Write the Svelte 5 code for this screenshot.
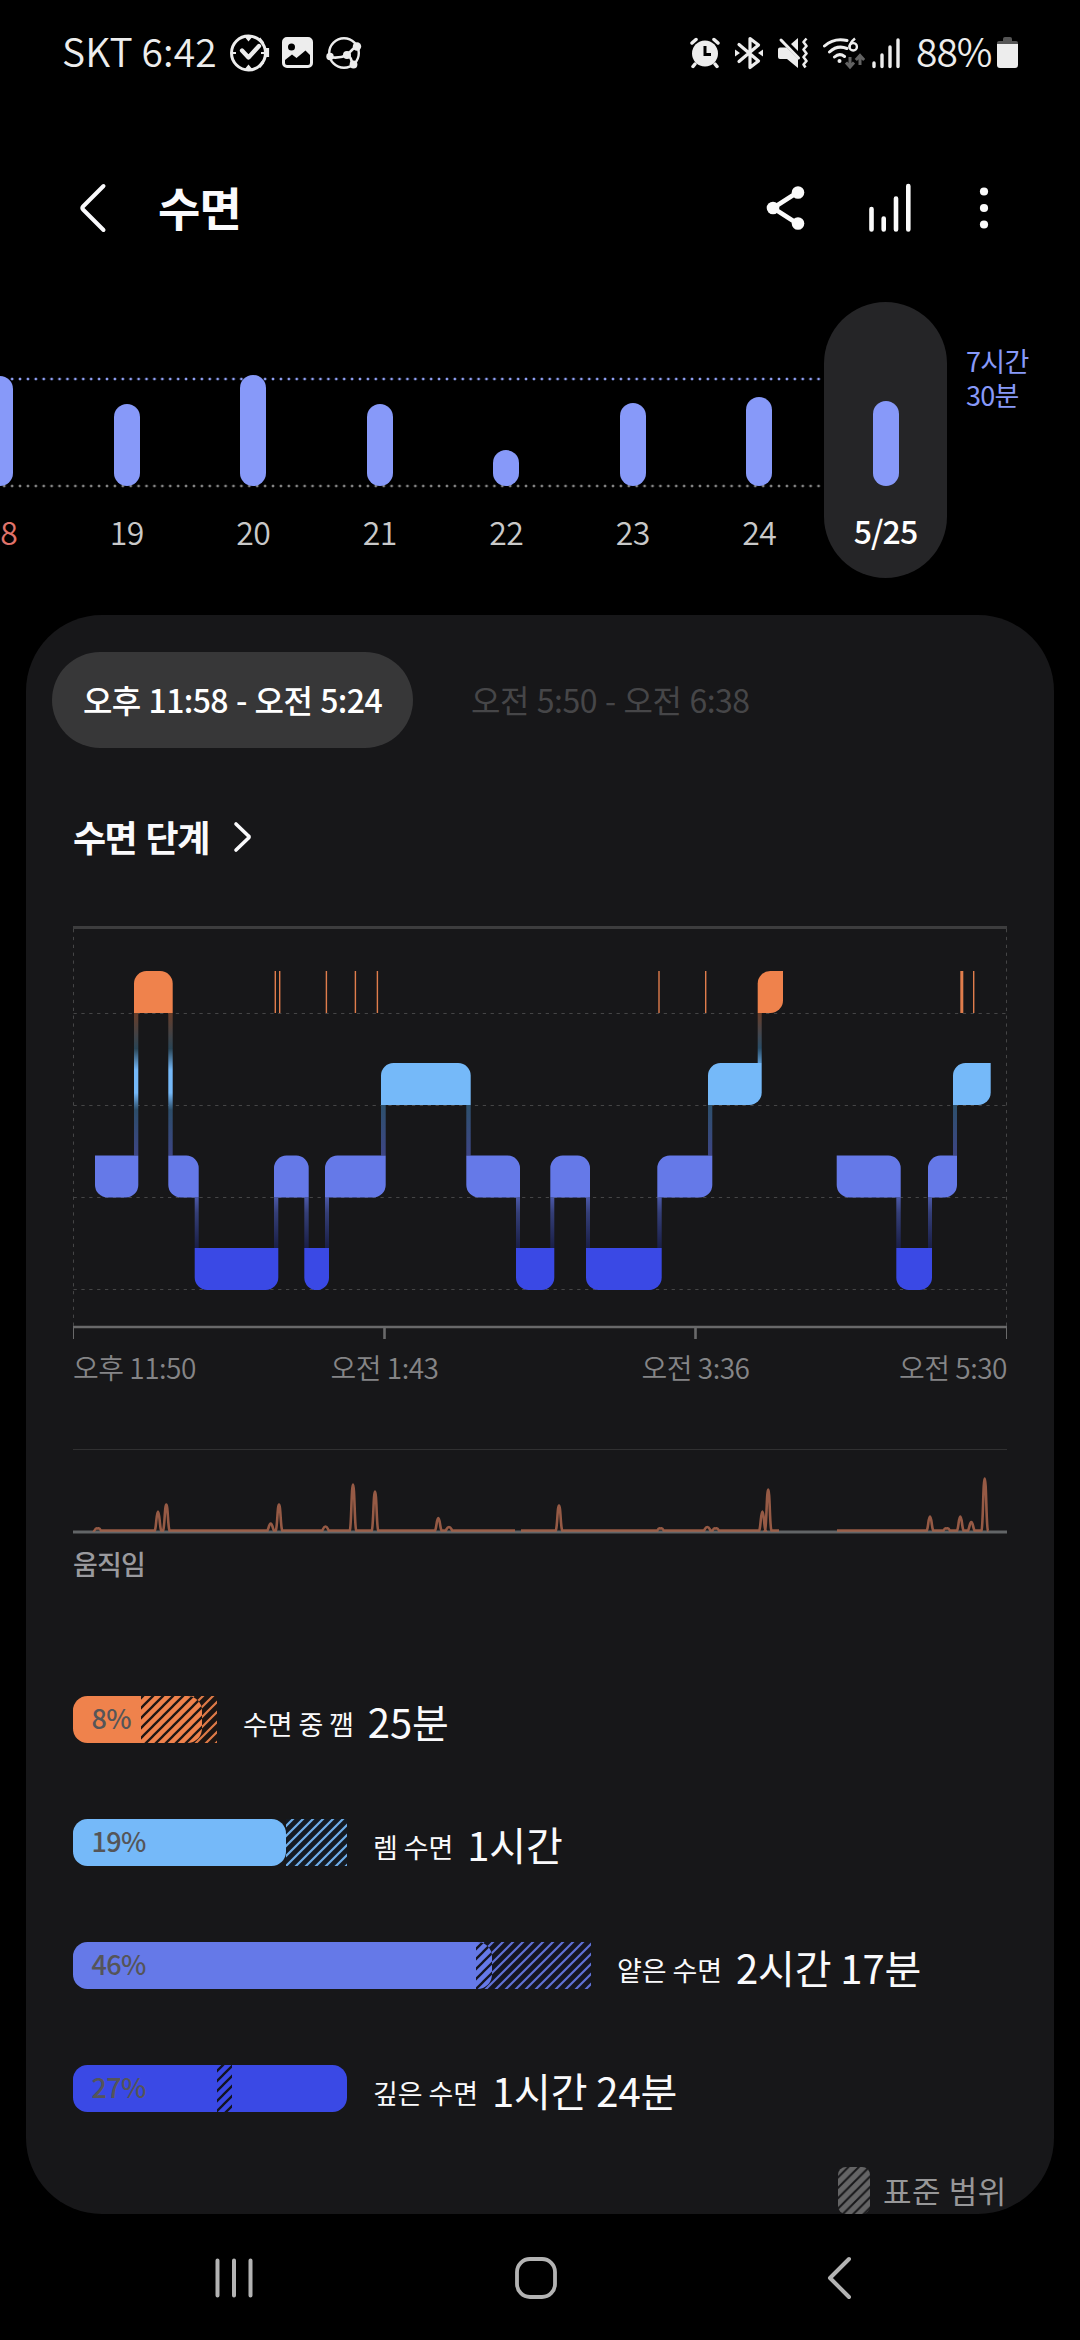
<script>
  const days = [
    { label: '18', height: 110, holiday: true },
    { label: '19', height: 82 },
    { label: '20', height: 111 },
    { label: '21', height: 82 },
    { label: '22', height: 36 },
    { label: '23', height: 83 },
    { label: '24', height: 89 },
    { label: '5/25', height: 85, selected: true }
  ]

  const colors = { awake: '#ef824c', rem: '#75b9f9', light: '#6579e8', deep: '#3a49e5' }
  const tops = { awake: 45, rem: 137, light: 229.5, deep: 322 }
  const BLOCK = 42

  // [stage, start, end, rounded corners: top-left, top-right, bottom-right, bottom-left]
  const segments = [
    ['light', 22, 65.3, 0, 0, 1, 1],
    ['awake', 61, 99.7, 1, 1, 0, 0],
    ['light', 95.3, 125.7, 0, 1, 0, 1],
    ['deep', 121.7, 205.3, 0, 0, 1, 1],
    ['light', 201, 235.7, 1, 1, 0, 0],
    ['deep', 231.3, 256, 0, 0, 1, 1],
    ['light', 252, 312.7, 1, 0, 1, 0],
    ['rem', 308, 397.7, 1, 1, 0, 0],
    ['light', 393.3, 447, 0, 1, 0, 1],
    ['deep', 443, 481.3, 0, 0, 1, 1],
    ['light', 477.3, 517, 1, 1, 0, 0],
    ['deep', 513, 588.7, 0, 0, 1, 1],
    ['light', 584.3, 639.3, 1, 0, 1, 0],
    ['rem', 635, 688.7, 1, 0, 1, 0],
    ['awake', 684.7, 710, 1, 0, 1, 0],
    ['light', 763.7, 827.7, 0, 1, 0, 1],
    ['deep', 823.3, 859, 0, 0, 1, 1],
    ['light', 855, 884, 1, 0, 1, 0],
    ['rem', 880, 917.7, 1, 0, 1, 0]
  ]

  // segments overlap by a few pixels, the overlap is where the link runs
  const links = segments.slice(1).flatMap((seg, i) => {
    const prev = segments[i]
    if (seg[1] > prev[2]) return []
    const [upper, lower] = tops[prev[0]] < tops[seg[0]] ? [prev[0], seg[0]] : [seg[0], prev[0]]
    return [{
      x: seg[1],
      width: prev[2] - seg[1],
      y: tops[upper] + BLOCK,
      height: tops[lower] - tops[upper] - BLOCK,
      fill: `url(#${upper}-${lower})`
    }]
  })

  const wakes = [
    [201.6, 1.4], [206, 1.4], [252.7, 1.4], [281.7, 1.4], [303.7, 1.4],
    [585.3, 1.4], [632, 1.4], [887.3, 3], [900, 1.4]
  ]

  const times = ['오후 11:50', '오전 1:43', '오전 3:36', '오전 5:30']

  const BASE = 81.5
  const movement = [
    { from: 22, to: 442, peaks: [[24.7, 2], [85, 19], [93.3, 26], [197.7, 7], [206, 26], [252.5, 4], [280, 46], [302, 39], [365.3, 12.5], [376, 3.5]] },
    { from: 448, to: 706, peaks: [[486, 25], [587.5, 2], [634.3, 3.5], [642.7, 2], [689.4, 19], [695.2, 41]] },
    { from: 764, to: 915.5, peaks: [[857, 14], [873.7, 2], [887.3, 14], [898.3, 8.5], [911.7, 52]] }
  ]

  function movementPath({ from, to, peaks }) {
    let d = `M${from} ${BASE}`
    for (const [x, h] of peaks) {
      const top = BASE - h
      d += `L${x - 3.2} ${BASE}C${x - 1.6} ${BASE - 3} ${x - 1.6} ${top} ${x} ${top}`
      d += `C${x + 1.6} ${top} ${x + 1.6} ${BASE - 3} ${x + 3.2} ${BASE}`
    }
    return d + `L${to} ${BASE}`
  }

  function blockPath([stage, x1, x2, tl, tr, br, bl]) {
    const y1 = tops[stage]
    const y2 = y1 + BLOCK
    const r = Math.min(12.5, (x2 - x1) / (tl + tr === 2 || bl + br === 2 ? 2 : 1))
    const c = (on) => (on ? r : 0)
    return `M${x1 + c(tl)} ${y1}H${x2 - c(tr)}a${c(tr)} ${c(tr)} 0 0 1 ${c(tr)} ${c(tr)}` +
      `V${y2 - c(br)}a${c(br)} ${c(br)} 0 0 1 ${-c(br)} ${c(br)}` +
      `H${x1 + c(bl)}a${c(bl)} ${c(bl)} 0 0 1 ${-c(bl)} ${-c(bl)}` +
      `V${y1 + c(tl)}a${c(tl)} ${c(tl)} 0 0 1 ${c(tl)} ${-c(tl)}Z`
  }

  const stages = [
    { id: 'awake', name: '수면 중 깸', percent: 8, time: '25분', fill: 129, range: [68, 144], shade: '#1d1613' },
    { id: 'rem', name: '렘 수면', percent: 19, time: '1시간', fill: 213, range: [213, 274], shade: '#141a22' },
    { id: 'light', name: '얕은 수면', percent: 46, time: '2시간 17분', fill: 419, range: [403, 518], shade: '#141522' },
    { id: 'deep', name: '깊은 수면', percent: 27, time: '1시간 24분', fill: 274, range: [144, 159], shade: '#121322' }
  ]
</script>

<div class="screen">
  <div class="status-bar">
    <div class="status-left">
      <span class="status-text">SKT 6:42</span>
      <svg class="icon-watch" width="40" height="38" viewBox="0 0 40 38" fill="none" stroke="#ededed">
        <circle cx="18.500" cy="19" r="17" stroke-width="3" />
        <path d="M29 4.500l4 5M36 15.500h1.500v6H36M33 28l-4 5" stroke-width="3.200" />
        <path d="M12 16.500l6.500 7L29 12" stroke-width="4.300" stroke-linecap="round" stroke-linejoin="round" />
        <path d="M2 19h4M31 19h4" stroke-width="2" />
        <path d="M14 2h9l-4.500 5.500zM14 36h9l-4.500-5.500z" fill="#ededed" stroke="none" />
      </svg>
      <svg class="icon-image" width="31" height="32" viewBox="0 0 31 32">
        <path fill="#ededed" fill-rule="evenodd" d="M5 0h21a5 5 0 0 1 5 5v21a5 5 0 0 1-5 5H5a5 5 0 0 1-5-5V5a5 5 0 0 1 5-5zM9.500 6.500a3.500 3.500 0 1 0 0 7 3.500 3.500 0 0 0 0-7zM3 23v3a2 2 0 0 0 2 2h21a2 2 0 0 0 2-2V18l-4.500-4.500L14.500 21 10 17.500z" />
      </svg>
      <svg class="icon-ball" width="36" height="34" viewBox="0 0 36 34" fill="none" stroke="#ededed" stroke-width="2.400">
        <circle cx="18" cy="17" r="14.800" />
        <path d="M3 21q10 2 18-2l9-9M21 18q5 4 5 10" stroke-width="2.600" />
        <g fill="#ededed" stroke="none">
          <circle cx="31" cy="10.500" r="4.200" />
          <circle cx="4" cy="20.500" r="3.700" />
          <circle cx="21" cy="19" r="4" />
          <circle cx="27.500" cy="28.500" r="3.900" />
        </g>
      </svg>
    </div>
    <div class="status-right">
      <svg width="30" height="32" viewBox="0 0 30 32">
        <g fill="none" stroke="#ededed" stroke-width="3.500" stroke-linecap="round">
          <path d="M2 6l4-3.500M28 6l-4-3.500M5 27l-2 2.500M25 27l2 2.500" />
        </g>
        <circle cx="15" cy="16.500" r="13" fill="#ededed" />
        <path d="M15 9v8.500h6" fill="none" stroke="#000" stroke-width="3" />
      </svg>
      <svg width="28" height="34" viewBox="0 0 28 34" fill="none" stroke="#ededed" stroke-width="3.200" stroke-linejoin="round">
        <path d="M4 8.500L23.500 25 15 31.500V2.500L23.500 9 4 25.500" stroke-linecap="round" />
        <path d="M0 13.500l5 3.500-5 3.500zM28 13.500L23 17l5 3.500z" fill="#ededed" stroke="none" />
      </svg>
      <svg width="30" height="32" viewBox="0 0 30 32">
        <path fill="#ededed" d="M0 12.500a2 2 0 0 1 2-2h6.500L20 22v9L9 22H2a2 2 0 0 1-2-2zM20 1v13l-7-7z" />
        <path d="M3 3l17.500 18" stroke="#ededed" stroke-width="3" stroke-linecap="round" />
        <path d="M28.500 1.500l-3 3.500 3 4-3 3.500 3 4-3 3.500 3 4-3 3.500 2 3" fill="none" stroke="#ededed" stroke-width="2.600" stroke-linejoin="round" />
      </svg>
      <svg width="42" height="34" viewBox="0 0 42 34" fill="none" stroke="#ededed" stroke-width="3">
        <path d="M1.500 10Q11 1.500 24 4.500M6.500 16q8-7.500 17.500-3.500M11.500 21q5-4.500 10-.5" stroke-linecap="round" />
        <circle cx="16.500" cy="25" r="2" fill="#ededed" stroke="none" />
        <path d="M32 2.500q-5.500 4.500-5.500 9" stroke-width="2.400" />
        <circle cx="30.200" cy="10.800" r="3.700" stroke-width="2.400" />
        <path d="M27 21v10m-4-4.500l4 4.500 4-4.500M37 29V19.500m-4.200 4.500l4.200-4.500 4.200 4.500" stroke="#626262" />
      </svg>
      <svg class="icon-signal" width="29" height="32" viewBox="0 0 29 32" stroke="#ededed" stroke-width="3.400" stroke-linecap="round">
        <path d="M2 26v3.500M10 18v11.500M18 10v19.500M26 3v26.500" />
      </svg>
      <span class="status-text battery-text">88%</span>
      <svg width="21" height="32" viewBox="0 0 21 32">
        <path fill="#555" d="M6 2q0-2 2-2h5q2 0 2 2v2h4a2 2 0 0 1 2 2v2H0V6a2 2 0 0 1 2-2h4z" />
        <path fill="#ededed" d="M0 7h21v21a3 3 0 0 1-3 3H3a3 3 0 0 1-3-3z" />
      </svg>
    </div>
  </div>

  <header class="app-bar">
    <svg width="28" height="50" viewBox="0 0 28 50" fill="none" stroke="#fafafc" stroke-width="4" stroke-linecap="round" stroke-linejoin="round">
      <path d="M24.500 3L4 23.500q-1.500 1.500 0 3L24.500 47" />
    </svg>
    <h1>수면</h1>
    <div class="app-actions">
      <svg width="40" height="46" viewBox="0 0 40 46" fill="#fafafa">
        <path d="M32 7L7 23l25 16" fill="none" stroke="#fafafa" stroke-width="4.500" />
        <circle cx="32" cy="7.500" r="6.300" />
        <circle cx="7" cy="23" r="6.300" />
        <circle cx="32" cy="38.500" r="6.300" />
      </svg>
      <svg class="icon-bars" width="44" height="50" viewBox="0 0 44 50" stroke="#fafafa" stroke-width="4.600" stroke-linecap="round">
        <path d="M3.500 26v20.500M15.700 35.500v11M28 15.500v31M40.300 3v43.500" />
      </svg>
      <svg width="10" height="44" viewBox="0 0 10 44" fill="#fafafa">
        <circle cx="5" cy="5.500" r="4.100" />
        <circle cx="5" cy="22" r="4.100" />
        <circle cx="5" cy="38.500" r="4.100" />
      </svg>
    </div>
  </header>

  <section class="week">
    <div class="days">
      {#each days as day}
        <div class="day" class:selected={day.selected} class:holiday={day.holiday}>
          <span class="day-bar" style="height: {day.height}px"></span>
          <span class="day-label">{day.label}</span>
        </div>
      {/each}
    </div>
    <div class="goal">7시간<br />30분</div>
  </section>

  <main class="card">
    <div class="sessions">
      <button class="session active">오후 11:58 - 오전 5:24</button>
      <button class="session">오전 5:50 - 오전 6:38</button>
    </div>

    <div class="section-title">
      <h2>수면 단계</h2>
      <svg width="20" height="32" viewBox="0 0 20 32" fill="none" stroke="#fafafc" stroke-width="3.600" stroke-linecap="round" stroke-linejoin="round">
        <path d="M3 3l12.500 12q1.200 1 0 2L3 29" />
      </svg>
    </div>

    <svg class="stage-chart" width="935" height="415" viewBox="0 0 935 415">
      <defs>
        <linearGradient id="awake-light" x1="0" y1="0" x2="0" y2="1">
          <stop offset="0" stop-color="#683d29" />
          <stop offset=".25" stop-color="#294455" />
          <stop offset=".4" stop-color="#75b9f9" />
          <stop offset=".56" stop-color="#75b9f9" />
          <stop offset=".68" stop-color="#2c4d69" />
          <stop offset="1" stop-color="#3d4585" />
        </linearGradient>
        <linearGradient id="awake-rem" x1="0" y1="0" x2="0" y2="1">
          <stop offset="0" stop-color="#683d29" />
          <stop offset=".7" stop-color="#294c66" />
          <stop offset="1" stop-color="#5a96cb" />
        </linearGradient>
        <linearGradient id="rem-light" x1="0" y1="0" x2="0" y2="1">
          <stop offset="0" stop-color="#2d506c" />
          <stop offset="1" stop-color="#3d4585" />
        </linearGradient>
        <linearGradient id="light-deep" x1="0" y1="0" x2="0" y2="1">
          <stop offset="0" stop-color="#4b58a8" />
          <stop offset=".3" stop-color="#343e77" />
          <stop offset="1" stop-color="#1a1f48" />
        </linearGradient>
      </defs>
      <g stroke="#454546" stroke-width="1" stroke-dasharray="3.300 4.570">
        {#each [87.5, 179.5, 271.5, 363.5] as y}
          <path d="M0.500 {y}H934" />
        {/each}
        <path d="M0.500 3V400M933.500 3V400" />
      </g>
      <path d="M0 1.500H934" stroke="#3d3d3e" stroke-width="3" />
      <path d="M0 401H934" stroke="#69696a" stroke-width="2.600" />
      <path d="M0.500 401V413M933.500 401V413" stroke="#69696a" />
      <path d="M311.500 401V413M622.500 401V413" stroke="#69696a" stroke-width="2.600" />

      {#each links as link}
        <rect x={link.x} y={link.y} width={link.width} height={link.height} fill={link.fill} />
      {/each}
      {#each segments as seg}
        <path d={blockPath(seg)} fill={colors[seg[0]]} />
      {/each}
      {#each wakes as [x, width]}
        <rect x={x} y="45" {width} height="42" fill="#e07d4c" />
      {/each}
    </svg>
    <div class="times">
      {#each times as time}
        <span>{time}</span>
      {/each}
    </div>

    <svg class="movement" width="935" height="86" viewBox="0 0 935 86">
      <path d="M0 0.500H934" stroke="#303031" />
      <path d="M0 83H934" stroke="#626567" stroke-width="3" />
      {#each movement as part}
        <path d={movementPath(part)} fill="none" stroke="#a9644b" stroke-width="2.600" stroke-opacity=".88" />
      {/each}
    </svg>
    <div class="movement-label">움직임</div>

    <div class="stages">
      {#each stages as stage}
        {@const end = Math.max(stage.fill, stage.range[1])}
        <div class="stage">
          <div class="stage-bar">
            <svg width={end} height="47" viewBox="0 0 {end} 47">
              <defs>
                <clipPath id="fill-{stage.id}">
                  <rect width={stage.fill} height="47" rx="14.500" />
                </clipPath>
                <pattern id="out-{stage.id}" width="10" height="10" patternUnits="userSpaceOnUse">
                  <rect width="10" height="10" fill={stage.shade} />
                  <path d="M-2 12L12-2M-2 2L2-2M8 12l4-4" stroke={colors[stage.id]} stroke-width="2.200" stroke-opacity=".92" />
                </pattern>
                <pattern id="in-{stage.id}" width="10" height="10" patternUnits="userSpaceOnUse">
                  <path d="M-2 12L12-2M-2 2L2-2M8 12l4-4" stroke={stage.shade} stroke-width="2.300" />
                </pattern>
              </defs>
              <rect x={stage.range[0]} width={stage.range[1] - stage.range[0]} height="47" fill="url(#out-{stage.id})" />
              <g clip-path="url(#fill-{stage.id})">
                <rect width={stage.fill} height="47" fill={colors[stage.id]} />
                {#if stage.fill > stage.range[0]}
                  <rect x={stage.range[0]} width={stage.range[1] - stage.range[0]} height="47" fill="url(#in-{stage.id})" />
                {/if}
              </g>
            </svg>
            <span class="percent">{stage.percent}%</span>
          </div>
          <div class="stage-info">
            <span class="stage-name">{stage.name}</span>
            <span class="stage-time">{stage.time}</span>
          </div>
        </div>
      {/each}
    </div>

    <div class="legend">
      <svg width="32" height="47" viewBox="0 0 32 47">
        <defs>
          <pattern id="legend-hatch" width="10.400" height="10.400" patternUnits="userSpaceOnUse">
            <rect width="10.400" height="10.400" fill="#646465" />
            <path d="M-2 12.400L12.400-2M-2 2L2-2M8.400 12.400l4-4" stroke="#171719" stroke-width="2" />
          </pattern>
        </defs>
        <rect width="32" height="47" rx="8" fill="url(#legend-hatch)" />
      </svg>
      <span>표준 범위</span>
    </div>
  </main>

  <nav class="nav-bar">
    <svg width="40" height="42" viewBox="0 0 40 42" stroke="#b3b3b3" stroke-width="4" stroke-linecap="round">
      <path d="M3.500 3.500v35M20 3.500v35M36.500 3.500v35" />
    </svg>
    <svg class="icon-home" width="42" height="42" viewBox="0 0 42 42" fill="none" stroke="#b3b3b3" stroke-width="3.800">
      <rect x="2" y="2" width="38" height="38" rx="13" />
    </svg>
    <svg width="26" height="44" viewBox="0 0 26 44" fill="none" stroke="#b3b3b3" stroke-width="4" stroke-linecap="round" stroke-linejoin="round">
      <path d="M23 3L4 22l19 19" />
    </svg>
  </nav>
</div>

<style>
  :global(body) {
    margin: 0;
    background: #000;
  }

  .screen {
    width: 1080px;
    height: 2340px;
    display: flex;
    flex-direction: column;
    background: #000;
    color: #fafafc;
    font-family: 'Noto Sans CJK KR', 'Noto Sans', sans-serif;
    overflow: hidden;
    white-space: nowrap;
  }

  svg {
    display: block;
    flex: none;
  }

  h1,
  h2 {
    margin: 0;
  }

  .status-bar {
    height: 106px;
    box-sizing: border-box;
    padding: 0 62px;
    display: flex;
    justify-content: space-between;
    align-items: center;
  }

  .status-left,
  .status-right {
    display: flex;
    align-items: center;
  }

  .status-left {
    gap: 12px;
  }

  .status-text {
    width: 156px;
    font-size: 39px;
    line-height: 50px;
    font-weight: 350;
    letter-spacing: 0.1px;
    color: #ededed;
    margin-top: -6px;
  }

  .icon-ball {
    margin-left: 1px;
  }

  .status-right {
    gap: 15px;
  }

  .icon-signal {
    margin-left: -8px;
  }

  .battery-text {
    width: 76px;
    margin-right: -10px;
    letter-spacing: -1px;
  }

  .app-bar {
    height: 204px;
    box-sizing: border-box;
    padding: 0 91px 0 79px;
    display: flex;
    align-items: center;
  }

  .app-bar h1 {
    margin-left: 51px;
    margin-top: -5px;
    font-size: 46px;
    line-height: 60px;
    font-weight: 700;
    letter-spacing: -0.8px;
  }

  .app-actions {
    margin-left: auto;
    display: flex;
    align-items: center;
  }

  .icon-bars {
    margin: 0 67px 0 62px;
  }

  .week {
    height: 305px;
    display: flex;
    margin-top: -8px;
  }

  .days {
    width: 1010px;
    margin-left: -63px;
    flex: none;
    display: flex;
    background:
      radial-gradient(circle, #8fa0f5 1.2px, transparent 1.7px) 0 73px / 7.91px 8px repeat-x,
      radial-gradient(circle, #858585 1.2px, transparent 1.7px) 0 180px / 7.91px 8px repeat-x;
  }

  .day {
    width: 126.5px;
    height: 276px;
    flex: none;
    display: flex;
    flex-direction: column;
    align-items: center;
    justify-content: flex-end;
  }

  .day-bar {
    width: 26px;
    border-radius: 13px;
    background: #8799f9;
  }

  .day-label {
    margin-top: 21px;
    height: 71px;
    font-size: 32px;
    line-height: 48px;
    letter-spacing: -0.5px;
    font-weight: 350;
    color: #c9c9c9;
  }

  .holiday .day-label {
    color: #e0736b;
  }

  .selected {
    width: 123px;
    margin-left: 1.5px;
    border-radius: 62px;
    background: #252527;
  }

  .selected .day-label {
    margin-top: 20px;
    height: 72px;
    font-weight: 500;
    letter-spacing: -0.9px;
    color: #fff;
  }

  .goal {
    margin: 42px 0 0 19px;
    font-size: 27px;
    line-height: 34px;
    letter-spacing: -0.7px;
    color: #8799f9;
  }

  .card {
    margin: 8px 26px 0;
    height: 1599px;
    flex: none;
    box-sizing: border-box;
    padding: 37px 47px 0;
    border-radius: 76px;
    background: #171719;
  }

  .sessions {
    display: flex;
    gap: 26px;
    margin-left: -21px;
  }

  .session {
    height: 96px;
    padding: 0 32px 2px;
    border: none;
    border-radius: 48px;
    background: none;
    font-family: inherit;
    font-size: 32px;
    letter-spacing: -0.5px;
    word-spacing: 1.3px;
    color: #464648;
  }

  .active {
    width: 361px;
    padding: 0 0 2px;
    background: #373738;
    font-weight: 500;
    letter-spacing: -0.6px;
    color: #fff;
  }

  .section-title {
    height: 60px;
    margin-top: 59px;
    display: flex;
    align-items: center;
    gap: 24px;
  }

  .section-title h2 {
    font-size: 36px;
    line-height: 60px;
    font-weight: 700;
    letter-spacing: -1.6px;
    word-spacing: 3px;
    margin-top: -3px;
  }

  .stage-chart {
    margin-top: 59px;
  }

  .times {
    width: 934px;
    margin-top: 5px;
    display: grid;
    grid-template-columns: 157px 309px 313px 155px;
    font-size: 28px;
    line-height: 42px;
    letter-spacing: -0.5px;
    font-weight: 350;
    color: #858587;
    text-align: center;
  }

  .times span:first-child {
    text-align: left;
  }

  .times span:last-child {
    text-align: right;
  }

  .movement {
    margin-top: 61px;
  }

  .movement-label {
    height: 40px;
    margin-top: 9px;
    font-size: 27px;
    line-height: 40px;
    font-weight: 500;
    letter-spacing: -0.9px;
    color: #9a9a9e;
  }

  .stages {
    margin-top: 112px;
    display: flex;
    flex-direction: column;
    gap: 76px;
  }

  .stage {
    height: 47px;
    display: flex;
    gap: 26px;
  }

  .stage-bar {
    position: relative;
  }

  .percent {
    position: absolute;
    left: 18.5px;
    top: 0;
    font-size: 27px;
    line-height: 43px;
    font-weight: 500;
    letter-spacing: -0.6px;
    color: #555558;
  }

  .stage-info {
    display: flex;
    align-items: flex-start;
    gap: 14px;
    line-height: 50px;
  }

  .stage-name {
    margin-top: 3px;
    font-size: 27px;
    letter-spacing: -0.1px;
  }

  .stage-time {
    font-size: 40px;
    letter-spacing: -0.1px;
  }

  .legend {
    margin-top: 55px;
    display: flex;
    justify-content: flex-end;
    align-items: center;
    gap: 13px;
    font-size: 31px;
    line-height: 45px;
    letter-spacing: 0.6px;
    color: #979798;
  }

  .legend span {
    margin-top: -2px;
  }

  .nav-bar {
    flex: 1;
    padding: 1px 0 0 214px;
    display: flex;
    align-items: center;
  }

  .icon-home {
    margin: 0 269px 0 261px;
  }
</style>
